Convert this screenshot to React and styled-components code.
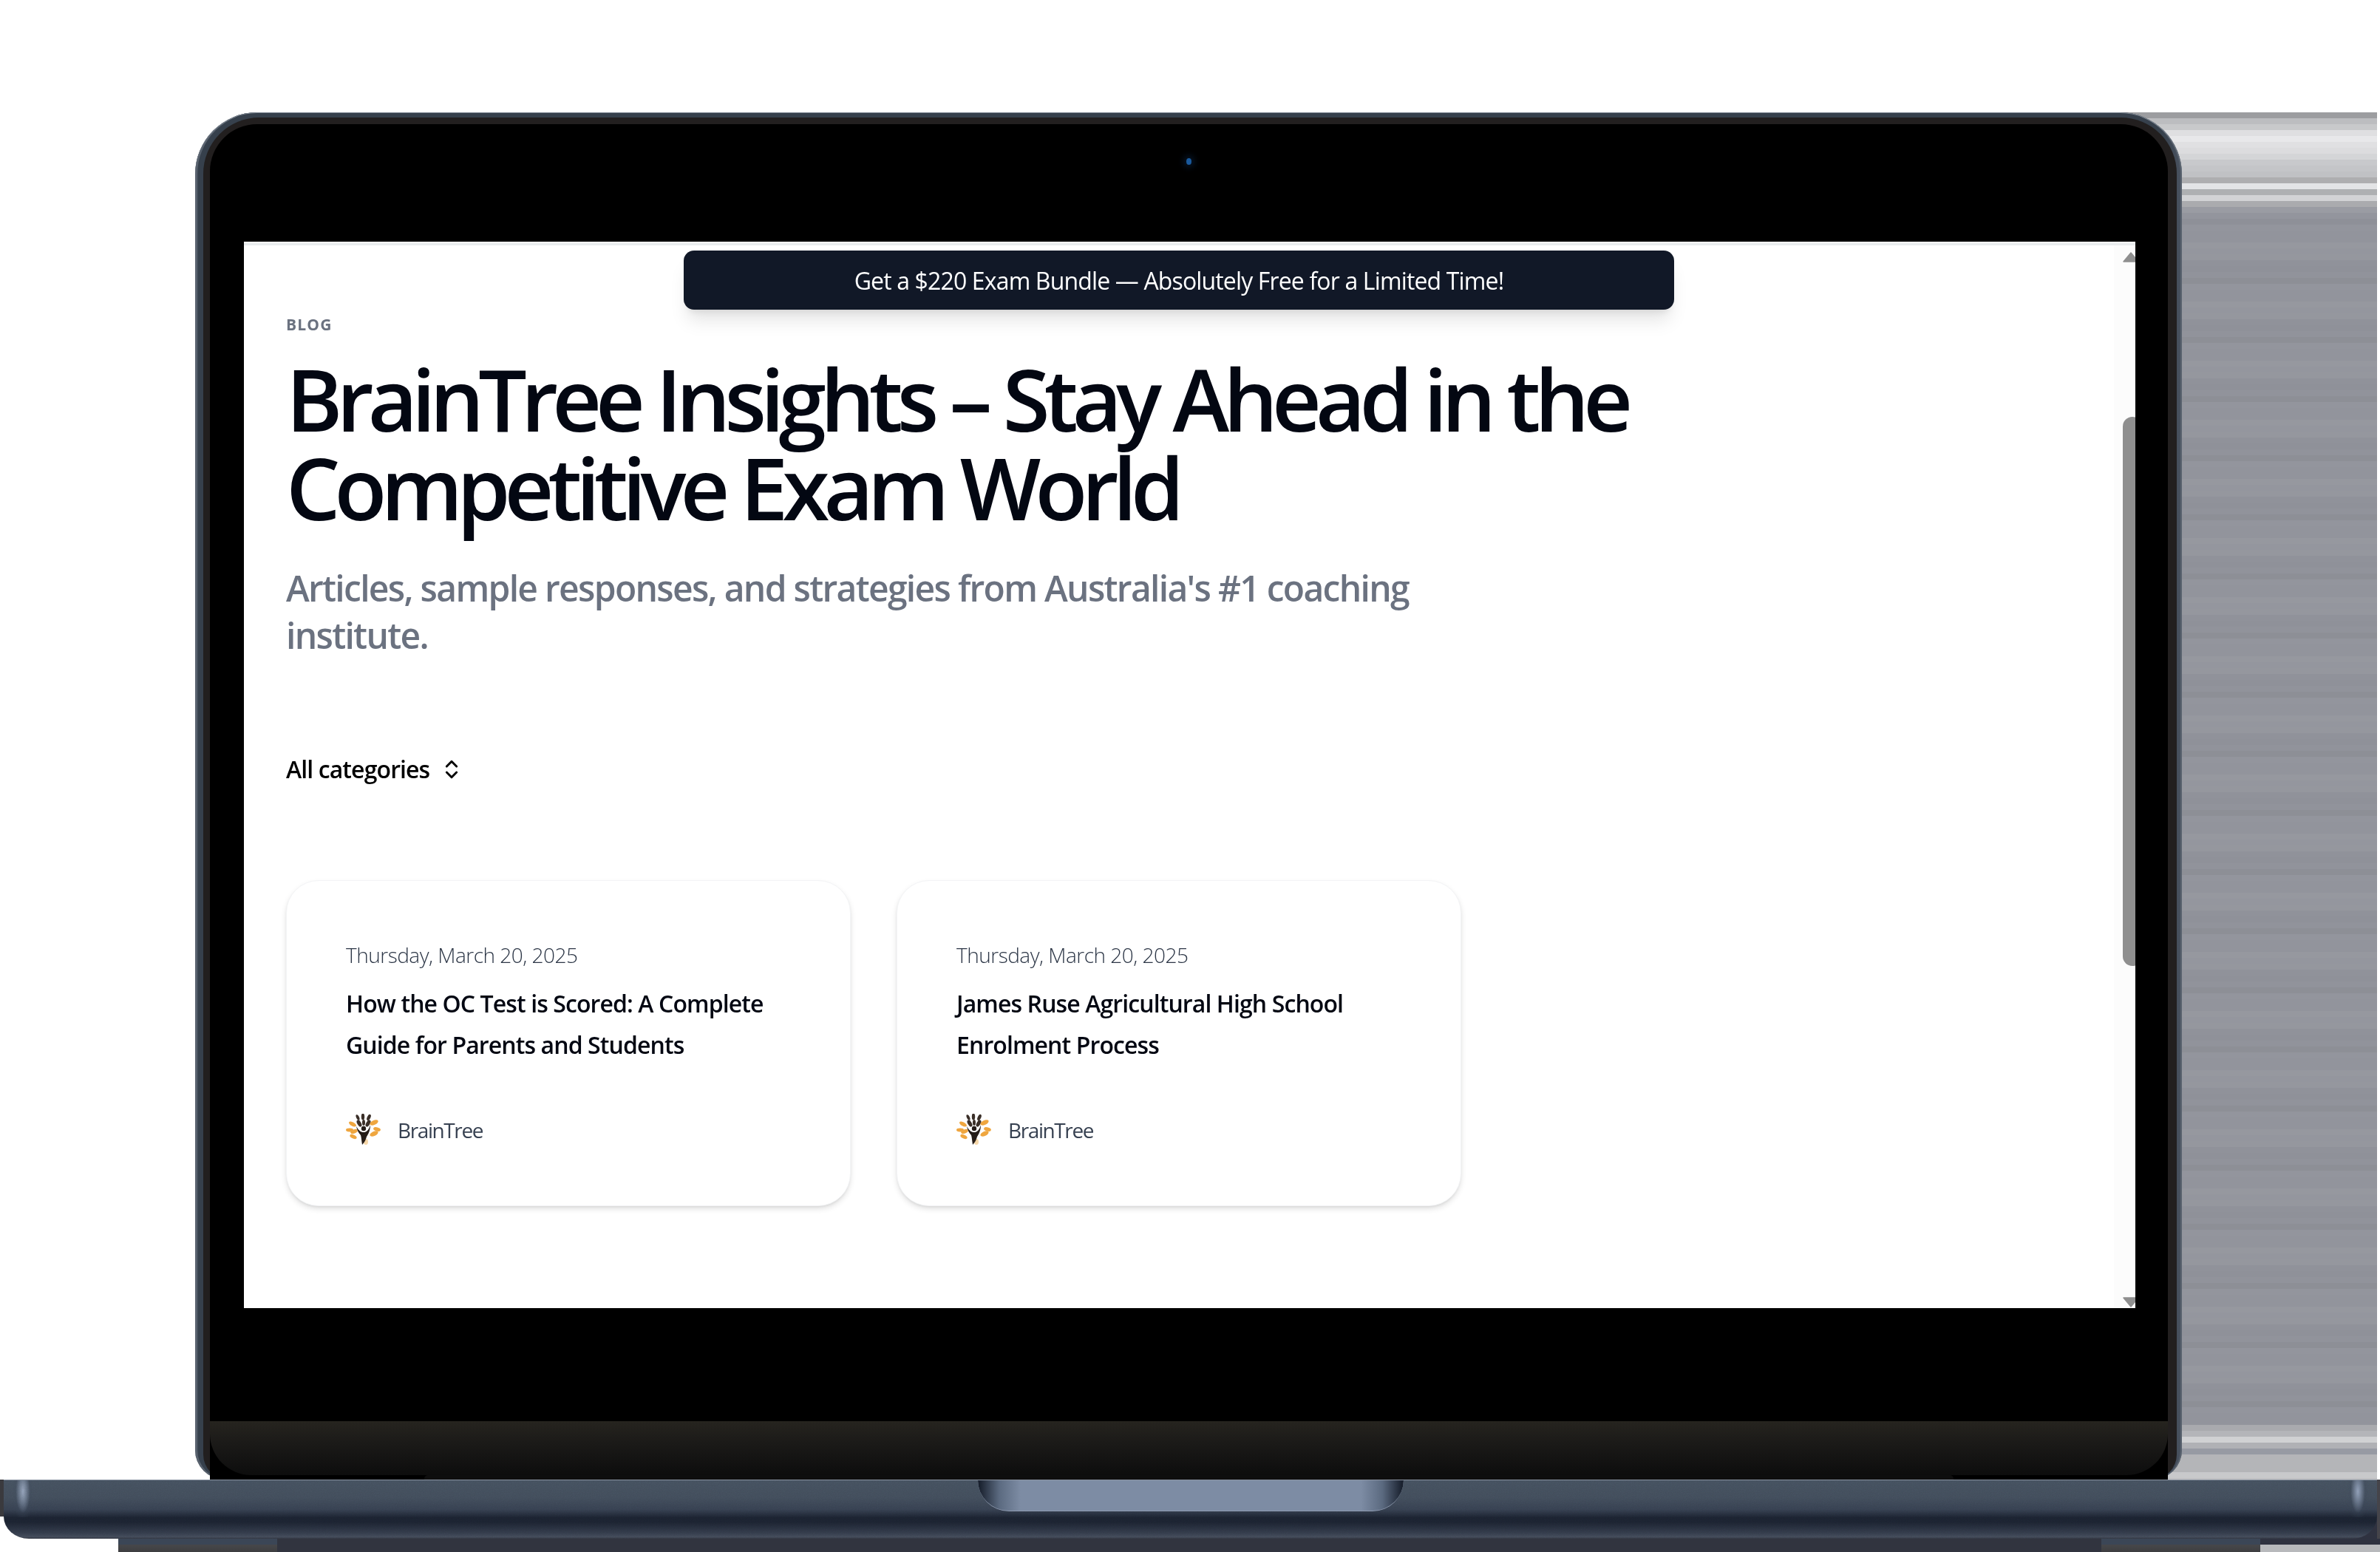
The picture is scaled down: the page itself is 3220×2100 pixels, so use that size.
import React from "react";
import styled, { createGlobalStyle } from "styled-components";
import { ChevronsUpDown } from "lucide-react";

const GlobalStyle = createGlobalStyle`
    html, body {
        margin: 0;
        padding: 0;
        background: #fff;
    }
    * {
        box-sizing: border-box;
    }
`;

// the glass reflection right of the lid is made of 8px horizontal bands
const topBands = ["#9c9da0", "#bcbdc0", "#c8c9cb", "#dfdfe1", "#e8e8ea", "#e0e0e2", "#dcdcde", "#d4d5d7", "#c8c9cc", "#c4c5c8", "#c0c1c4", "#aeaeb0", "#e3e4e6", "#aeb0b2", "#d2d3d5", "#aaabae", "#9a9ca3", "#93959d", "#8e9098"];
const midBands = ["#92949c", "#94969e", "#8f9199", "#93959d", "#96989f", "#90929a", "#8d8f96", "#92949c", "#95979e", "#91939b"];
const bottomBands = ["#a9aaae", "#b4b5b9", "#d0d1d3", "#b0b1b5", "#979aa3", "#b4b5b8", "#b4b5b8", "#b4b5b8", "#c8c9cb", "#bfc0c2"];

const bandGradient = () => {
    const total = Math.ceil(1850 / 8);
    const bands = [];
    for (let i = 0; i < total; i++) {
        if (i < topBands.length) bands.push(topBands[i]);
        else if (i >= total - bottomBands.length) bands.push(bottomBands[i - (total - bottomBands.length)]);
        else bands.push(midBands[(i * 7) % midBands.length]);
    }
    const stops = bands.map((c, i) => `${c} ${i * 8}px ${(i + 1) * 8}px`);
    return `linear-gradient(180deg, ${stops.join(", ")})`;
};

const Stage = styled.div`
    width: 3220px;
    height: 2100px;
    padding-top: 152px;
    overflow: hidden;
    background: #fff;
    font-family: "Open Sans", "Noto Sans", sans-serif;
`;

const LidRow = styled.div`
    height: 1850px;
    width: 2952px;
    margin-left: 264px;
    background: ${bandGradient()} right top / 350px 100% no-repeat;
`;

const Lid = styled.div`
    width: 2688px;
    height: 100%;
    padding: 7px 7px 0 11px;
    border-radius: 84px 84px 40px 40px;
    background: linear-gradient(90deg, #4c5563 0, #36404c 5px, #36404c 99%, #4a5361 100%);
    box-shadow: inset 0 1px 0 #7e8792, inset 3px 0 0 #59626e, inset -2px 0 0 #59626e;
`;

const Bezel = styled.div`
    height: 100%;
    padding: 9px 12px 0 9px;
    border-radius: 76px 76px 34px 34px;
    background: #221f1f;
`;

const Inner = styled.div`
    display: flex;
    flex-direction: column;
    height: 100%;
    border-radius: 64px 64px 0 0;
    background: #000;
`;

const CameraBar = styled.div`
    height: 159px;
    display: flex;
    justify-content: center;
    padding-top: 46px;
`;

const Camera = styled.div`
    width: 7px;
    height: 9px;
    border-radius: 50%;
    background: #1a5a9e;
    box-shadow: 0 0 8px 4px rgba(20, 60, 110, 0.35);
`;

const Screen = styled.div`
    position: relative;
    display: flex;
    height: 1443px;
    margin: 0 44px 0 46px;
    overflow: hidden;
    background: #fff;
    border-top: 2px solid #fff;
`;

const Banner = styled.div`
    position: absolute;
    top: 10px;
    left: 595px;
    width: 1340px;
    height: 80px;
    display: flex;
    align-items: center;
    justify-content: center;
    border-radius: 14px;
    background: #111827;
    color: #fff;
    font-size: 32px;
    letter-spacing: -0.85px;
    box-shadow: 0 20px 25px -5px rgba(0, 0, 0, 0.1), 0 8px 10px -6px rgba(0, 0, 0, 0.1);
`;

const Main = styled.main`
    flex: 1;
    padding: 93px 0 0 57px;
    border-top: 3px solid #e9ecee;
`;

const Eyebrow = styled.div`
    font-size: 21px;
    line-height: 28px;
    font-weight: 700;
    letter-spacing: 1.2px;
    color: #6b7280;
`;

const Title = styled.h1`
    width: 1900px;
    margin: 26px 0 0;
    font-size: 116px;
    line-height: 120px;
    font-weight: 600;
    letter-spacing: -7.9px;
    color: #030712;
`;

const Subtitle = styled.p`
    width: 1580px;
    margin: 45px 0 0;
    font-size: 48px;
    line-height: 64px;
    font-weight: 600;
    letter-spacing: -1.7px;
    color: #6b7280;
`;

const Filter = styled.div`
    display: flex;
    align-items: center;
    gap: 14px;
    margin-top: 125px;
    font-size: 32px;
    line-height: 48px;
    font-weight: 600;
    letter-spacing: -0.9px;
    color: #000;
`;

const Cards = styled.div`
    display: flex;
    gap: 62px;
    margin-top: 126px;
`;

const Card = styled.article`
    width: 764px;
    height: 441px;
    padding: 80px 80px 0;
    border: 1px solid #f3f4f6;
    border-radius: 44px;
    background: #fff;
    box-shadow: 0 4px 8px -1px rgba(0, 0, 0, 0.14), 0 2px 4px -2px rgba(0, 0, 0, 0.1);
`;

const CardDate = styled.div`
    font-size: 28px;
    line-height: 40px;
    font-weight: 300;
    letter-spacing: -0.5px;
    color: #2c3646;
`;

const CardTitle = styled.h2`
    margin: 18px 0 0;
    font-size: 32px;
    line-height: 56px;
    font-weight: 600;
    letter-spacing: -0.9px;
    color: #030712;
`;

const Author = styled.div`
    display: flex;
    align-items: center;
    gap: 22px;
    margin-top: 65px;
    font-size: 28px;
    line-height: 44px;
    font-weight: 400;
    letter-spacing: -1.4px;
    color: #374151;
`;

const ScrollTrack = styled.div`
    width: 29px;
    flex: none;
    padding-left: 12px;
    border-top: 3px solid #e9ecee;
    background: #fcfcfc;
    overflow: hidden;
`;

const ScrollUp = styled.svg`
    display: block;
    margin-top: 9px;
`;

const ScrollThumb = styled.div`
    width: 26px;
    height: 743px;
    margin-top: 209px;
    border-radius: 13px;
    background: #8f8f8f;
`;

const ScrollDown = styled.svg`
    display: block;
    margin-top: 448px;
`;

const Chin = styled.div`
    height: 73px;
    margin-top: 153px;
    border-radius: 0 0 56px 56px;
    background: linear-gradient(180deg, #26241f 0, #1b1a18 40%, #0d0d0d 100%);
`;

const ChinLip = styled.div`
    height: 6px;
    margin: 0 290px;
    border-radius: 5px 5px 0 0;
    background: #0e0e0e;
`;

const BaseRow = styled.div`
    padding: 0 4px 0 5px;
    background:
        linear-gradient(#45444a, #45444a) right top / 4px 100% no-repeat,
        linear-gradient(#3a3a3e, #3a3a3e) left top / 5px 50px no-repeat,
        linear-gradient(#2f3240, #2f3240) right bottom / 60px 36px no-repeat;
`;

const Base = styled.div`
    position: relative;
    display: flex;
    justify-content: center;
    height: 80px;
    border-radius: 0 0 34px 34px / 0 0 30px 30px;
    border-top: 1px solid #8b94a2;
    overflow: hidden;
    background: linear-gradient(180deg, #44505e 0, #414c5a 30%, #364050 50%, #1b2230 64%, #1c2331 72%, #333b4a 90%, #424a58 97%, #30343f 100%);
    &::before,
    &::after {
        content: "";
        position: absolute;
        top: 0;
        width: 60px;
        height: 50px;
        background: radial-gradient(ellipse 14px 42px at 50% 30%, rgba(150, 165, 190, 0.95), rgba(60, 72, 90, 0.25) 70%, rgba(40, 50, 65, 0) 100%);
    }
    &::before {
        left: -4px;
    }
    &::after {
        right: -4px;
    }
`;

const Grain = styled.svg`
    position: absolute;
    inset: 0;
    width: 100%;
    height: 100%;
    opacity: 0.16;
    mix-blend-mode: overlay;
`;

const Notch = styled.div`
    position: relative;
    width: 576px;
    height: 42px;
    border-radius: 0 0 42px 42px;
    background: linear-gradient(90deg, #141b28 0, #5b6a80 5%, #7d8ca4 10%, #7d8ca4 90%, #5b6a80 95%, #141b28 100%);
    border-bottom: 1px solid #8e9ab0;
`;

const FootRow = styled.div`
    display: flex;
    height: 19px;
    padding-left: 160px;
`;

const Foot = styled.div`
    width: 215px;
    flex: none;
    height: 100%;
    background: linear-gradient(180deg, #3b4656 0, #3b4656 42%, #46474a 44%, #3d3d3f 100%);
`;

const FootStrip = styled.div`
    flex: 1;
    background: #31343f;
`;

const Wing = styled.div`
    width: 162px;
    flex: none;
    background: linear-gradient(180deg, #2f3240 0 8px, #b8b9bc 8px 100%);
`;

const Logo = () => (
    <svg width="48" height="44" viewBox="0 0 48 44">
        <g fill="#3a2f28">
            <ellipse cx="16" cy="5" rx="2" ry="4" transform="rotate(-25 16 5)" />
            <ellipse cx="23" cy="4" rx="2.2" ry="4.5" />
            <ellipse cx="31" cy="5" rx="2.2" ry="4.5" transform="rotate(25 31 5)" />
            <ellipse cx="18" cy="13" rx="2.6" ry="5" transform="rotate(-30 18 13)" />
            <ellipse cx="30" cy="13" rx="2.6" ry="5" transform="rotate(30 30 13)" />
            <ellipse cx="24" cy="12" rx="2" ry="4" />
        </g>
        <g fill="#efa63f">
            <ellipse cx="9" cy="14" rx="5.5" ry="2.6" transform="rotate(30 9 14)" />
            <ellipse cx="38" cy="12" rx="6" ry="3" transform="rotate(-25 38 12)" />
            <ellipse cx="5" cy="22" rx="5" ry="2.4" />
            <ellipse cx="42" cy="21" rx="5" ry="2.6" transform="rotate(15 42 21)" />
            <ellipse cx="11" cy="24" rx="5" ry="2.6" transform="rotate(-20 11 24)" />
            <ellipse cx="38" cy="27" rx="6" ry="3" transform="rotate(-25 38 27)" />
            <ellipse cx="10" cy="31" rx="5" ry="2.4" transform="rotate(25 10 31)" />
            <ellipse cx="27" cy="38" rx="3" ry="4" fill="#f6d7a8" />
        </g>
        <circle cx="24" cy="20" r="3.2" fill="#241c18" />
        <path d="M14 17 C18 24 21 25 24 25 C28 25 31 22 33 15 C33 23 30 28 28 31 C27 35 25 39 22 42 C21 36 21 32 20 29 C17 26 15 22 14 17 Z" fill="#241c18" />
    </svg>
);

const posts = [
    { id: 1, date: "Thursday, March 20, 2025", title: "How the OC Test is Scored: A Complete Guide for Parents and Students" },
    { id: 2, date: "Thursday, March 20, 2025", title: "James Ruse Agricultural High School Enrolment Process" },
];

const App = () => (
    <>
        <GlobalStyle />
        <Stage>
            <LidRow>
                <Lid>
                    <Bezel>
                        <Inner>
                            <CameraBar>
                                <Camera />
                            </CameraBar>
                            <Screen>
                                <Main>
                                    <Eyebrow>BLOG</Eyebrow>
                                    <Title>BrainTree Insights – Stay Ahead in the Competitive Exam World</Title>
                                    <Subtitle>Articles, sample responses, and strategies from Australia's #1 coaching institute.</Subtitle>
                                    <Filter>
                                        All categories
                                        <ChevronsUpDown size={32} strokeWidth={2.2} />
                                    </Filter>
                                    <Cards>
                                        {posts.map(post => (
                                            <Card key={post.id}>
                                                <CardDate>{post.date}</CardDate>
                                                <CardTitle>{post.title}</CardTitle>
                                                <Author>
                                                    <Logo />
                                                    BrainTree
                                                </Author>
                                            </Card>
                                        ))}
                                    </Cards>
                                </Main>
                                <ScrollTrack>
                                    <ScrollUp width="22" height="14" viewBox="0 0 22 14">
                                        <path d="M11 1 L21 13 L1 13 Z" fill="#8f8f8f" stroke="#8f8f8f" strokeWidth="1.5" strokeLinejoin="round" />
                                    </ScrollUp>
                                    <ScrollThumb />
                                    <ScrollDown width="22" height="14" viewBox="0 0 22 14">
                                        <path d="M11 13 L21 1 L1 1 Z" fill="#8f8f8f" stroke="#8f8f8f" strokeWidth="1.5" strokeLinejoin="round" />
                                    </ScrollDown>
                                </ScrollTrack>
                                <Banner>Get a $220 Exam Bundle — Absolutely Free for a Limited Time!</Banner>
                            </Screen>
                            <Chin />
                            <ChinLip />
                        </Inner>
                    </Bezel>
                </Lid>
            </LidRow>
            <BaseRow>
                <Base>
                    <Grain>
                        <filter id="grain">
                            <feTurbulence type="fractalNoise" baseFrequency="0.8" numOctaves="2" />
                            <feColorMatrix type="saturate" values="0" />
                        </filter>
                        <rect width="100%" height="100%" filter="url(#grain)" />
                    </Grain>
                    <Notch />
                </Base>
            </BaseRow>
            <FootRow>
                <Foot />
                <FootStrip />
                <Foot />
                <Wing />
            </FootRow>
        </Stage>
    </>
);

export default App;
